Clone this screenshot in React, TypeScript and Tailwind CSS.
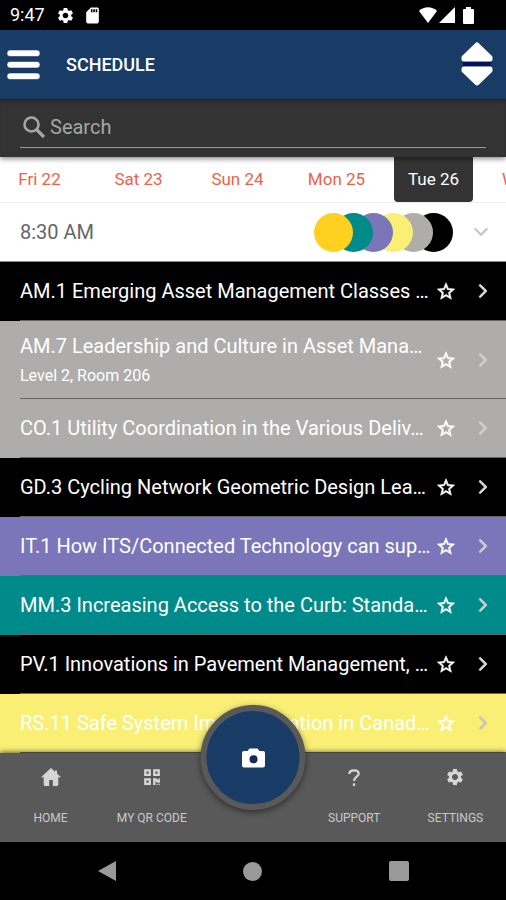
import { FaQrcode } from 'react-icons/fa';
import { IoIosArrowDown, IoIosArrowForward, IoMdStarOutline } from 'react-icons/io';
import { MdSdCard, MdSettings } from 'react-icons/md';

const days = ['Fri 22', 'Sat 23', 'Sun 24', 'Mon 25', 'Tue 26', 'Wed 27'];

const trackColors = ['bg-[#ffd01f]', 'bg-[#008b8b]', 'bg-[#7b76b9]', 'bg-[#f9ef75]', 'bg-[#aeadac]', 'bg-black'];

const sessions = [
  { title: 'AM.1 Emerging Asset Management Classes …', color: 'bg-black', arrow: 'text-[#d8d8d8]' },
  { title: 'AM.7 Leadership and Culture in Asset Mana…', room: 'Level 2, Room 206', color: 'bg-[#aeadac]', arrow: 'text-[#cfcfcf]' },
  { title: 'CO.1 Utility Coordination in the Various Deliv…', color: 'bg-[#aeadac]', arrow: 'text-[#cfcfcf]' },
  { title: 'GD.3 Cycling Network Geometric Design Lea…', color: 'bg-black', arrow: 'text-[#d8d8d8]' },
  { title: 'IT.1 How ITS/Connected Technology can sup…', color: 'bg-[#7b76b9]', arrow: 'text-[#cfcfcf]' },
  { title: 'MM.3 Increasing Access to the Curb: Standa…', color: 'bg-[#008b8b]', arrow: 'text-[#cfcfcf]' },
  { title: 'PV.1 Innovations in Pavement Management, …', color: 'bg-black', arrow: 'text-[#d8d8d8]' },
  { title: 'RS.11 Safe System Implementation in Canad…', color: 'bg-[#f9ef75]', arrow: 'text-[#c4c4bc]' },
];

function StatusBar() {
  return (
    <div className="flex h-[30px] shrink-0 items-center justify-between bg-black pl-2.5 pr-8 text-white">
      <div className="flex items-center">
        <span className="w-[46px] text-lg leading-none">9:47</span>
        <MdSettings className="size-[19px]" />
        <MdSdCard className="ml-2 size-[19px]" />
      </div>
      <div className="flex items-center gap-0.5">
        <svg className="h-4 w-[18px]" viewBox="0 0 18 16" fill="currentColor">
          <path d="M0 4C5-1 13-1 18 4L9 16Z" />
        </svg>
        <svg className="size-4" viewBox="0 0 16 16" fill="currentColor">
          <path d="M16 0V16H0Z" />
        </svg>
        <svg className="ml-1.5 h-[17px] w-[11px]" viewBox="0 0 11 17" fill="currentColor">
          <path d="M3 2V0H8V2H10Q11 2 11 3V16Q11 17 10 17H1Q0 17 0 16V3Q0 2 1 2Z" />
        </svg>
      </div>
    </div>
  );
}

function SearchIcon() {
  return (
    <svg className="size-7" viewBox="0 0 28 28" fill="none" stroke="currentColor">
      <circle cx="11.500" cy="11.500" r="7" strokeWidth="2.600" />
      <path d="M16.500 16.500L24 24" strokeWidth="3.200" />
    </svg>
  );
}

function HomeIcon() {
  return (
    <svg className="h-[18px] w-5" viewBox="0 0 20 18" fill="currentColor">
      <path d="M10 0L0 9.200H2.700V16.500Q2.700 18 4.200 18H8.200V12H11.800V18H15.800Q17.300 18 17.300 16.500V9.200H20L16 5.500V2.500H14V3.700Z" />
    </svg>
  );
}

function QuestionIcon() {
  return (
    <svg className="h-[17px] w-3" viewBox="0 0 12 17" fill="none" stroke="currentColor" strokeWidth="2.2">
      <path d="M1.300 5Q1.300 1.300 6 1.300T10.700 4.800C10.700 7.800 6 7.800 6 12" />
      <path d="M6 14.300V17" />
    </svg>
  );
}

function CameraIcon() {
  return (
    <svg className="h-5 w-6" viewBox="0 0 24 20">
      <path
        fill="currentColor"
        d="M8 0.500H16L18 3H21.500Q23.500 3 23.500 5V17.500Q23.500 19.500 21.500 19.500H2.500Q0.500 19.500 0.500 17.500V5Q0.500 3 2.500 3H6Z"
      />
      <circle cx="12" cy="11.300" r="4" fill="#14285c" />
    </svg>
  );
}

function NavItem({ label, children }: { label: string; children: React.ReactNode }) {
  return (
    <button className="flex flex-1 flex-col items-center pt-3 text-xs text-[#c9c9c9]">
      <span className="flex h-6 items-center text-[#d6d6d6]">{children}</span>
      <span className="mt-5 whitespace-nowrap leading-[18px]">{label}</span>
    </button>
  );
}

export default function App() {
  return (
    <div className="flex h-screen flex-col overflow-hidden bg-white font-['Roboto',sans-serif]">
      <StatusBar />

      {/* Header */}
      <header className="flex h-[69px] shrink-0 items-center bg-[#193c66] pl-[7px] pr-3 text-white">
        <button aria-label="Menu">
          <svg className="h-[30px] w-[33px]" viewBox="0 0 33 30" fill="currentColor" stroke="#0a1c5e" strokeWidth="0.5">
            <rect x="0" y="0" width="33" height="6.5" rx="3" />
            <rect x="0" y="11.5" width="33" height="6.5" rx="3" />
            <rect x="0" y="23" width="33" height="6.5" rx="3" />
          </svg>
        </button>
        <h1 className="ml-[26px] flex-1 text-lg font-medium">SCHEDULE</h1>
        <button aria-label="Change view">
          <svg className="mb-0.5 h-[46px] w-[34px]" viewBox="0 0 34 46" fill="currentColor">
            <path d="M3 23H31" stroke="#06135c" strokeWidth="4" />
            <g stroke="currentColor" strokeWidth="5" strokeLinejoin="round">
              <path d="M17 4L30 16.500V18H4V16.500Z" />
              <path d="M17 42L30 29.500V28H4V29.500Z" />
            </g>
          </svg>
        </button>
      </header>

      {/* Search */}
      <div className="relative z-10 flex h-[58px] shrink-0 bg-[#333] px-5 pb-[9px] pt-2 shadow-[0_2px_5px_rgba(0,0,0,0.45),inset_0_4px_4px_-2px_rgba(0,0,0,0.3)]">
        <label className="flex flex-1 items-center gap-0.5 border-b border-[#999] text-[#a6a6a6]">
          <SearchIcon />
          <input
            type="search"
            aria-label="Search"
            placeholder="Search"
            className="min-w-0 flex-1 bg-transparent text-xl outline-none placeholder:text-[#a6a6a6]"
          />
        </label>
      </div>

      {/* Days */}
      <div className="flex h-[46px] shrink-0 overflow-hidden border-b border-[#eee] text-[17px]">
        {days.map((day) => (
          <button
            key={day}
            className={
              day === 'Tue 26'
                ? 'mx-[9px] w-[79px] shrink-0 rounded-b bg-[#333] text-white'
                : 'w-[79px] mr-5 shrink-0 whitespace-nowrap text-[#ef6148] last:ml-[9px] nth-4:mr-[9px]'
            }
          >
            {day}
          </button>
        ))}
      </div>

      {/* Time slot */}
      <button className="flex h-[59px] shrink-0 items-center border-b border-[#888] pl-5 pr-[15px] text-left">
        <span className="flex-1 text-xl text-[#666]">8:30 AM</span>
        <span className="flex flex-row-reverse pl-5">
          {[...trackColors].reverse().map((color) => (
            <span key={color} className={`relative -ml-[19px] size-[39px] rounded-full ${color}`} />
          ))}
        </span>
        <IoIosArrowDown className="ml-[18px] size-5 text-[#c4c4c4]" stroke="currentColor" strokeWidth="14" />
      </button>

      {/* Sessions */}
      <ul className="min-h-0 flex-1 overflow-hidden">
        {sessions.map((session) => (
          <li key={session.title} className={`pl-5 text-white ${session.color}`}>
            <div className={`flex items-center border-b border-[#666] pr-[13px] ${session.room ? 'h-[78px]' : 'h-[59px]'}`}>
              <a href="#" className="min-w-0 flex-1">
                <span className="block whitespace-nowrap text-xl leading-7">{session.title}</span>
                {session.room && <span className="mt-1 block text-base leading-6">{session.room}</span>}
              </a>
              <button aria-label="Add to favourites" className="mr-4">
                <IoMdStarOutline className="size-[22px]" stroke="currentColor" strokeWidth="14" />
              </button>
              <IoIosArrowForward className={`size-5 ${session.arrow}`} stroke="currentColor" strokeWidth="24" />
            </div>
          </li>
        ))}
      </ul>

      {/* Tab bar */}
      <nav className="relative z-10 flex h-[89px] shrink-0 bg-[#595959] shadow-[0_-1px_5px_rgba(0,0,0,0.6)]">
        <NavItem label="HOME">
          <HomeIcon />
        </NavItem>
        <NavItem label="MY QR CODE">
          <FaQrcode className="size-[18px]" />
        </NavItem>
        <div className="flex-1" />
        <NavItem label="SUPPORT">
          <QuestionIcon />
        </NavItem>
        <NavItem label="SETTINGS">
          <MdSettings className="size-5" />
        </NavItem>
        <button
          aria-label="Camera"
          className="absolute -top-12 left-1/2 flex size-[105px] -translate-x-1/2 items-center justify-center rounded-full border-[6px] border-[#595959] bg-[#193c66] text-white shadow-[0_2px_6px_rgba(0,0,0,0.5)]"
        >
          <CameraIcon />
        </button>
      </nav>

      {/* System buttons */}
      <div className="flex h-[58px] shrink-0 items-center justify-around bg-black px-[34px] text-[#999]">
        <button aria-label="Back">
          <svg className="h-[22px] w-5" viewBox="0 0 20 22" fill="currentColor">
            <path d="M19 1V21L1 11Z" />
          </svg>
        </button>
        <button aria-label="Home" className="size-[19px] rounded-full bg-[#999]" />
        <button aria-label="Recent apps" className="size-5 rounded-xs bg-[#999]" />
      </div>
    </div>
  );
}
